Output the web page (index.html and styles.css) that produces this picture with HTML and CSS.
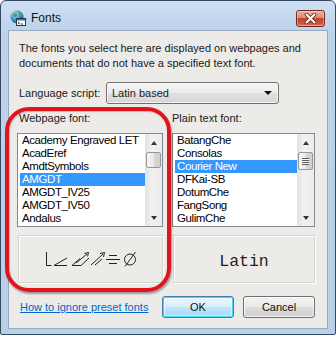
FILE: index.html
```html
<!DOCTYPE html>
<html>
<head>
<meta charset="utf-8">
<link rel="stylesheet" href="styles.css">
</head>
<body>
<div class="window">
  <div class="titlebar">
    <svg class="app-icon" width="16" height="16" viewBox="0 0 16 16">
      <defs>
        <radialGradient id="g" cx="0.35" cy="0.3" r="0.8">
          <stop offset="0" stop-color="#bfe6ff"/>
          <stop offset="0.5" stop-color="#3a8fd6"/>
          <stop offset="1" stop-color="#1d4f9a"/>
        </radialGradient>
      </defs>
      <circle cx="7" cy="7" r="6.5" fill="url(#g)"/>
      <path d="M3 4 Q5 2 7 4 Q8 6 6 7 Q4 8 3 6Z M9 2 Q12 3 12 6 L10 6 Q9 4 9 2Z" fill="#4caf3a"/>
      <rect x="6.5" y="8.5" width="9" height="7" fill="#ffffff" stroke="#2a3a4a"/>
      <rect x="7" y="9" width="8" height="1.5" fill="#3a6fb0"/>
      <path d="M8 12 L9.5 13 L8 14 M10.5 14 H13" stroke="#222" stroke-width="0.8" fill="none"/>
    </svg>
    <span class="title">Fonts</span>
    <div class="close">
      <svg width="13" height="11" viewBox="0 0 13 11">
        <path d="M2.5 1.5 L10.5 9.5 M10.5 1.5 L2.5 9.5" stroke="#6b2418" stroke-width="3.6" stroke-linecap="round"/>
        <path d="M2.5 1.5 L10.5 9.5 M10.5 1.5 L2.5 9.5" stroke="#ffffff" stroke-width="2" stroke-linecap="round"/>
      </svg>
    </div>
  </div>
  <div class="client">
    <p class="desc">The fonts you select here are displayed on webpages and<br>documents that do not have a specified text font.</p>
    <div class="lang-row">
      <span class="lang-label">Language script:</span>
      <div class="combo">
        <span>Latin based</span>
        <span class="combo-arrow"></span>
      </div>
    </div>
    <div class="columns">
      <div class="col">
        <div class="col-label">Webpage font:</div>
        <div class="listbox">
          <ul class="items">
            <li>Academy Engraved LET</li>
            <li>AcadEref</li>
            <li>AmdtSymbols</li>
            <li class="sel">AMGDT</li>
            <li>AMGDT_IV25</li>
            <li>AMGDT_IV50</li>
            <li>Andalus</li>
          </ul>
          <div class="scrollbar">
            <div class="sb-btn"><span class="tri-up"></span></div>
            <div class="sb-track">
              <div class="thumb thumb-left"></div>
            </div>
            <div class="sb-btn"><span class="tri-down"></span></div>
          </div>
        </div>
        <div class="preview">
          <svg class="gdt" width="95" height="16" viewBox="0 0 95 16">
            <g stroke="#222" stroke-width="1" fill="none">
              <path d="M1.5 1 V14.5 H6.5"/>
              <path d="M9 14.5 H22 M9 14.5 L22 7"/>
              <path d="M27 14.5 H36 L44 7 M27 14.5 L35 7.5"/>
              <path d="M31 12 L42 3"/>
              <path d="M39.5 2.5 L43.5 1.5 L42.5 5.5"/>
              <path d="M46 14 L58 3"/>
              <path d="M55 2.5 L59.5 1.5 L58.5 6"/>
              <path d="M50 14 L57 8"/>
              <path d="M64 4.5 H72 M61 8.5 H75 M64 12.5 H72"/>
              <circle cx="85" cy="8.5" r="5.5"/>
              <path d="M80 15.5 L90.5 1"/>
            </g>
          </svg>
        </div>
      </div>
      <div class="col col-right">
        <div class="col-label">Plain text font:</div>
        <div class="listbox">
          <ul class="items">
            <li>BatangChe</li>
            <li>Consolas</li>
            <li class="sel">Courier New</li>
            <li>DFKai-SB</li>
            <li>DotumChe</li>
            <li>FangSong</li>
            <li>GulimChe</li>
          </ul>
          <div class="scrollbar">
            <div class="sb-btn"><span class="tri-up"></span></div>
            <div class="sb-track">
              <div class="thumb thumb-right"><span class="grip"></span></div>
            </div>
            <div class="sb-btn"><span class="tri-down"></span></div>
          </div>
        </div>
        <div class="preview">
          <span class="latin">Latin</span>
        </div>
      </div>
    </div>
    <div class="bottom-row">
      <a class="link" href="#">How to ignore preset fonts</a>
      <div class="buttons">
        <button class="btn btn-default">OK</button>
        <button class="btn">Cancel</button>
      </div>
    </div>
  </div>
  <div class="annotation"></div>
</div>
</body>
</html>
```

FILE: styles.css
```css
* { box-sizing: border-box; }
html, body { margin: 0; padding: 0; background: #ffffff; }
body {
  width: 336px;
  height: 337px;
  overflow: hidden;
  font-family: "Liberation Sans", Arial, sans-serif;
  font-size: 11px;
  color: #1a1a1a;
}
.window {
  position: relative;
  width: 336px;
  height: 335px;
  border: 1px solid #34495f;
  border-radius: 6px 6px 2px 2px;
  background: linear-gradient(#cfe0f2 0px, #bcd3eb 30px, #b9d0e9 100%);
  display: flex;
  flex-direction: column;
}
.titlebar {
  height: 29px;
  display: flex;
  align-items: flex-start;
  padding: 9px 10px 0 9px;
}
.app-icon { display: block; flex: none; }
.title {
  margin-left: 5px;
  margin-top: 0px;
  font-size: 12px;
  line-height: 17px;
  color: #111;
}
.close {
  margin-left: auto;
  width: 29px;
  height: 17px;
  border: 1px solid #6e2a1d;
  border-radius: 3px;
  background: linear-gradient(#eab0a2 0%, #d98a77 45%, #c8452b 50%, #c9503a 80%, #db7a5e 100%);
  display: flex;
  align-items: center;
  justify-content: center;
  box-shadow: inset 0 0 0 1px rgba(255,255,255,0.35);
}
.close svg { display: block; }
.client {
  margin: 0 7px;
  height: 299px;
  background: #edebe8;
  border: 1px solid #98abc2;
  display: flex;
  flex-direction: column;
}
.desc {
  margin: 10px 0 0 10px;
  line-height: 15px;
  white-space: nowrap;
}
.lang-row {
  margin-top: 11px;
  padding-left: 10px;
  display: flex;
  align-items: center;
  height: 22px;
  white-space: nowrap;
}
.lang-label { width: 87px; flex: none; }
.combo {
  width: 173px;
  height: 22px;
  border: 1px solid #707070;
  border-radius: 3px;
  background: linear-gradient(#f4f4f4 0%, #ececec 50%, #e0e0e0 51%, #d6d6d6 100%);
  display: flex;
  align-items: center;
  padding: 0 6px 0 5px;
  box-shadow: inset 0 0 0 1px rgba(255,255,255,0.7);
}
.combo span:first-child { flex: 1; }
.combo-arrow {
  width: 0;
  height: 0;
  border-left: 4px solid transparent;
  border-right: 4px solid transparent;
  border-top: 4px solid #111;
}
.columns {
  margin-top: 7px;
  padding-left: 8px;
  display: grid;
  grid-template-columns: 146px 143px;
  column-gap: 9px;
}
.col { display: flex; flex-direction: column; }
.col-label {
  line-height: 15px;
  height: 15px;
  padding-left: 2px;
  margin-bottom: 7px;
  white-space: nowrap;
}
.col-right .col-label { padding-left: 0; }
.listbox {
  height: 94px;
  border: 1px solid #828790;
  background: #ffffff;
  display: flex;
}
.items {
  list-style: none;
  margin: 0;
  padding: 0 0 0 2px;
  flex: 1;
  font-family: "Liberation Sans", Arial, sans-serif;
  font-size: 11.5px;
  letter-spacing: -0.4px;
}
.items li {
  height: 13px;
  line-height: 13px;
  padding-left: 2px;
  color: #000;
  white-space: nowrap;
}
.items li.sel { background: #3399ff; color: #ffffff; }
.scrollbar {
  width: 17px;
  flex: none;
  display: flex;
  flex-direction: column;
  background: linear-gradient(90deg, #e2e2e2, #f1f1f1 40%, #ebebeb);
}
.sb-btn {
  height: 17px;
  display: flex;
  align-items: center;
  justify-content: center;
}
.tri-up, .tri-down {
  width: 0; height: 0;
  border-left: 3.5px solid transparent;
  border-right: 3.5px solid transparent;
}
.tri-up { border-bottom: 4px solid #333; }
.tri-down { border-top: 4px solid #333; }
.sb-track { flex: 1; position: relative; }
.thumb {
  margin: 1px 1px 0 1px;
  border: 1px solid #979797;
  border-radius: 2px;
  background: linear-gradient(90deg, #f6f6f6, #e8e8e8 50%, #d6d6d6 51%, #cfcfcf);
  display: flex;
  align-items: center;
  justify-content: center;
}
.thumb-left { height: 16px; }
.thumb-right { height: 18px; }
.grip {
  width: 7px;
  height: 7px;
  background: repeating-linear-gradient(#5e5e5e 0 1px, #f4f4f4 1px 2px);
}
.preview {
  margin-top: 8px;
  height: 48px;
  margin-left: 1px;
  border: 1px solid #d5d3cf;
  box-shadow: inset 1px 1px 0 #ffffff, 1px 1px 0 #ffffff;
  display: flex;
  align-items: center;
  justify-content: center;
}
.gdt { display: block; margin-left: 3px; }
.latin {
  font-family: "Liberation Mono", "Courier New", monospace;
  font-size: 16.5px;
  color: #222;
  margin-top: 4px;
}
.bottom-row {
  margin-top: 13px;
  padding: 0 12px 0 11px;
  display: flex;
  align-items: center;
  justify-content: space-between;
  height: 22px;
}
.link {
  color: #0066cc;
  text-decoration: underline;
  white-space: nowrap;
}
.buttons { display: flex; gap: 9px; }
.btn {
  width: 72px;
  height: 22px;
  font-family: "Liberation Sans", Arial, sans-serif;
  font-size: 11px;
  color: #111;
  border: 1px solid #707070;
  border-radius: 3px;
  background: linear-gradient(#f2f2f2 0%, #ebebeb 50%, #dddddd 51%, #cfcfcf 100%);
  box-shadow: inset 0 0 0 1px rgba(255,255,255,0.75);
  padding: 0;
}
.btn-default {
  border-color: #3c7fb1;
  box-shadow: inset 0 0 0 1px #48d4f7, inset 0 0 0 2px rgba(255,255,255,0.5);
  background: linear-gradient(#eaf6fd 0%, #d9f0fc 50%, #bee6fd 51%, #a7d9f5 100%);
}
.annotation {
  position: absolute;
  left: 4px;
  top: 106px;
  width: 166px;
  height: 185px;
  border: 4px solid #e0141c;
  border-radius: 24px;
  box-shadow: 1px 2px 2px rgba(0,0,0,0.35), inset 1px 1px 1px rgba(0,0,0,0.2);
  pointer-events: none;
}
```
